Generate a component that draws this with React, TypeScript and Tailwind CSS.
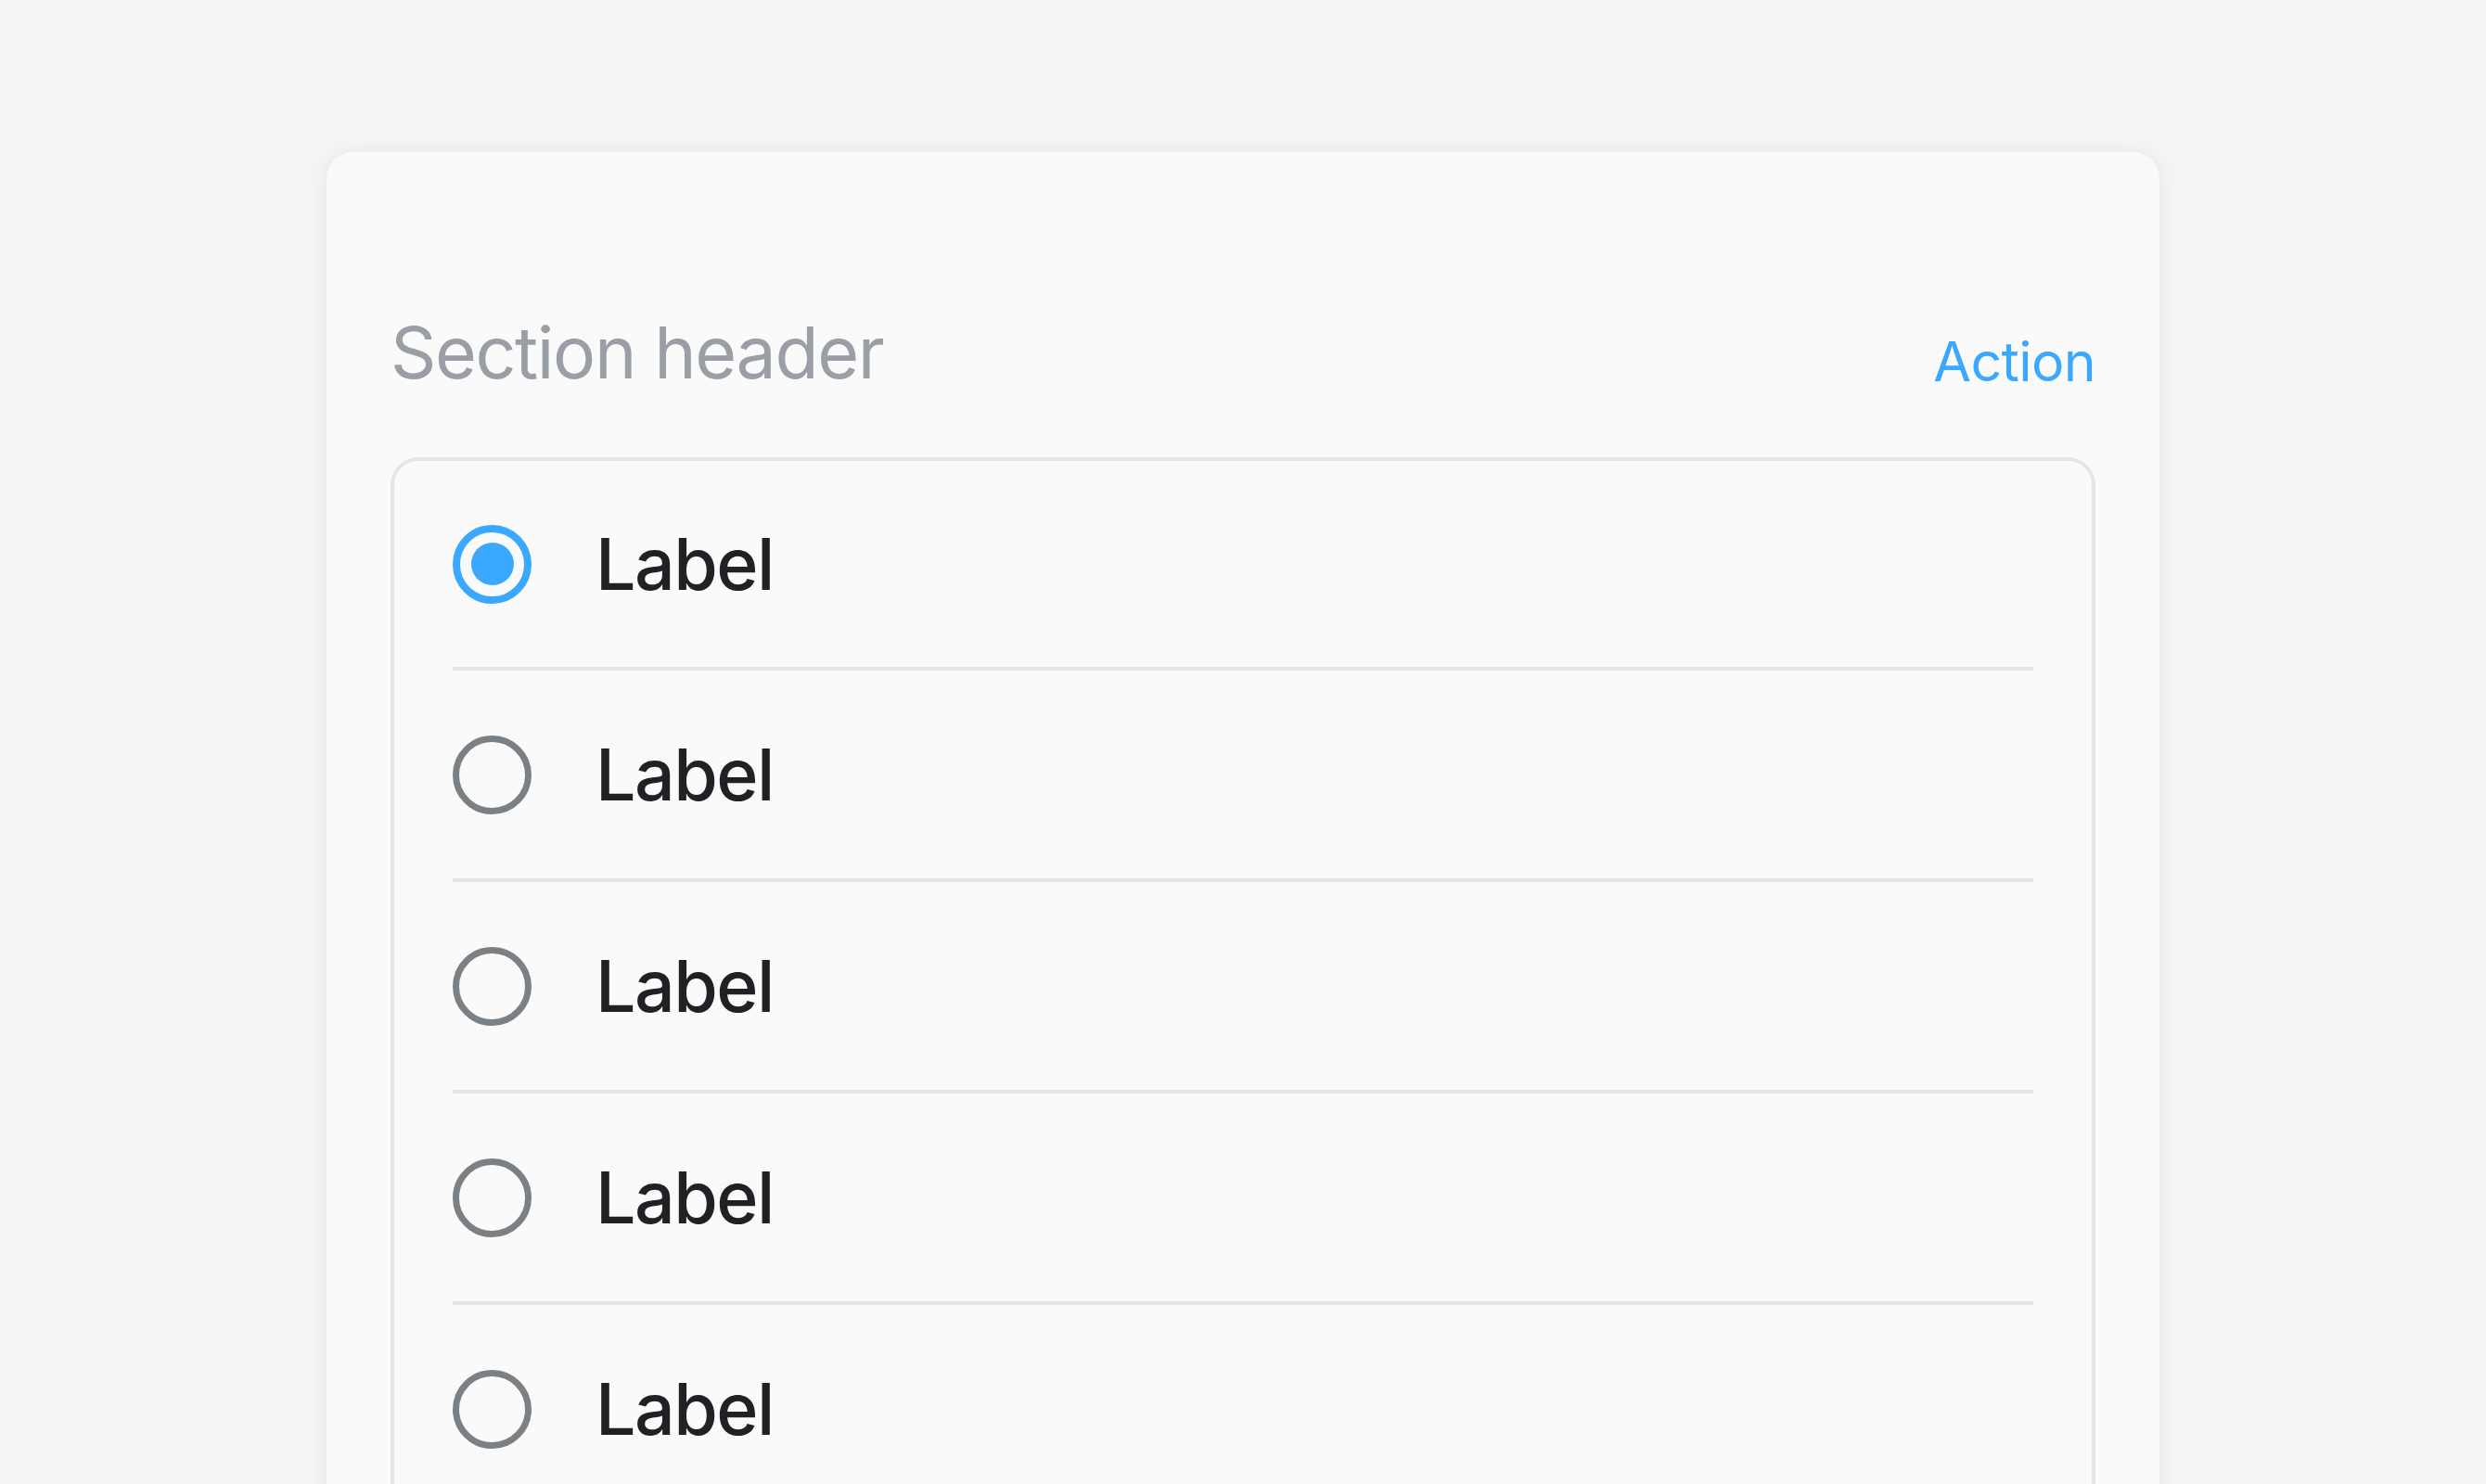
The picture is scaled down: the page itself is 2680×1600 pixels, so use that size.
import React from "react";

const rows = [true, false, false, false, false];

function Radio({ selected }: { selected: boolean }) {
  if (selected) {
    return (
      <div className="flex h-[85px] w-[85px] shrink-0 items-center justify-center rounded-full border-[8px] border-[#3aa8ff]">
        <div className="h-[46px] w-[46px] rounded-full bg-[#3aa8ff]" />
      </div>
    );
  }
  return <div className="h-[85px] w-[85px] shrink-0 rounded-full border-[7px] border-[#7b8084]" />;
}

export default function App() {
  return (
    <div
      className="h-[1600px] w-full overflow-hidden bg-[#f4f4f4] pt-[164px]"
      style={{ fontFamily: "Inter, 'Noto Sans', sans-serif" }}
    >
      <div className="mx-[352px] rounded-[28px] bg-[#fafafa] px-[69px] pt-[178px] pb-[80px] shadow-[0_0_18px_rgba(0,0,0,0.06)]">
        <div className="flex items-end justify-between">
          <div className="text-[77px] leading-none tracking-[-1.4px] text-[#999fa5]">Section header</div>
          <div className="text-[59px] leading-none tracking-[-0.6px] text-[#3aa8ff]">Action</div>
        </div>
        <div className="mt-[74px] rounded-[30px] border-[4px] border-[#e4e5e7] px-[63px] pb-[40px]">
          {rows.map((sel, i) => (
            <div key={i}>
              {i > 0 && <div className="h-[4px] bg-[#e4e5e7]" />}
              <div className={`flex items-center gap-[69px] ${i === 0 ? "h-[222px]" : "h-[224px]"}`}>
                <Radio selected={sel} />
                <div className="text-[77px] font-medium leading-none tracking-[-1.5px] text-[#202124]">Label</div>
              </div>
            </div>
          ))}
        </div>
      </div>
    </div>
  );
}
